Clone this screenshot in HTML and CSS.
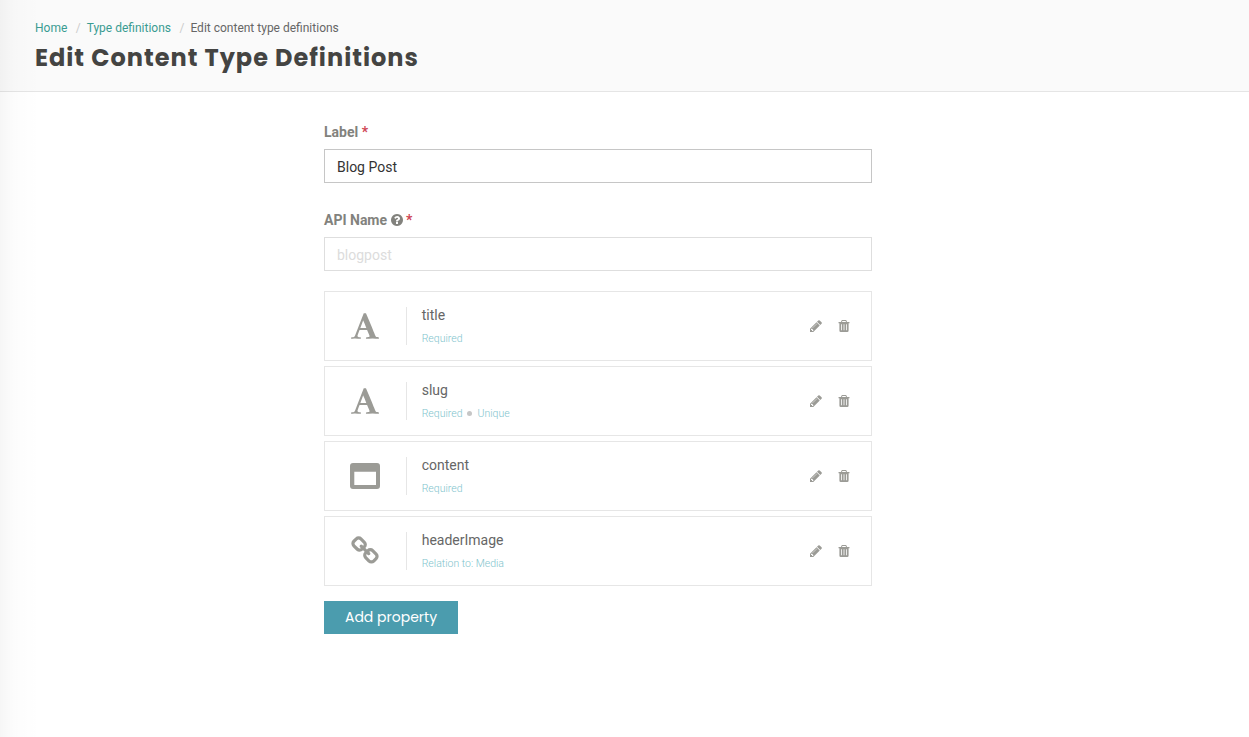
FILE: index.html
```html
<!DOCTYPE html>
<html lang="en">
<head>
<meta charset="utf-8">
<title>Edit Content Type Definitions</title>
<link rel="stylesheet" href="styles.css">
</head>
<body>
<svg class="sprite" aria-hidden="true">
  <symbol id="font" viewBox="0 0 1664 1792"><path d="M725 559l-170 450q33 0 136.500 2t160.500 2q19 0 57-2-87-253-184-450zM0 1664l2-79q23-7 56-12.500t57-10.500 49.500-14.500 44.500-29 31-50.500l237-616 280-724h128q8 14 11 21l205 480q33 78 106 257.500t114 274.500q15 34 58 144.500t72 168.500q20 45 35 57 19 15 88 29.500t84 20.500q6 38 6 57 0 5-.5 13.500t-.5 12.500q-63 0-190-8t-191-8q-76 0-215 7t-178 8q0-43 4-78l131-28q1 0 12.500-2.500t15.500-3.500 14.500-4.500 15-6.500 11-8 9-11 2.500-14q0-16-31-96.500t-72-177.500-42-100l-450-2q-26 58-76.500 195.500t-50.500 162.500q0 22 14 37.500t43.500 24.500 48.500 13.500 57 8.500 41 4q1 19 1 58 0 9-2 27-58 0-174.500-10t-174.500-10q-8 0-26.500 4t-21.500 4q-80 14-188 14z"/></symbol>
  <symbol id="window" viewBox="0 0 30 26"><path fill-rule="evenodd" d="M3 0h24a3 3 0 0 1 3 3v20a3 3 0 0 1-3 3H3a3 3 0 0 1-3-3V3a3 3 0 0 1 3-3zM4.300 8.700v13.300h21.700V8.700z"/></symbol>
  <symbol id="link" viewBox="0 0 1792 1792"><path d="M1520 1216q0-40-28-68l-208-208q-28-28-68-28-42 0-72 32 3 3 19 18.500t21.500 21.500 15 19 13 25.500 3.500 27.500q0 40-28 68t-68 28q-15 0-27.500-3.500t-25.500-13-19-15-21.500-21.500-18.500-19q-33 31-33 73 0 40 28 68l206 207q27 27 68 27 40 0 68-26l147-146q28-28 28-67zm-703-705q0-40-28-68l-206-207q-28-28-68-28-39 0-68 27l-147 146q-28 28-28 67 0 40 28 68l208 208q27 27 68 27 42 0 72-31-3-3-19-18.500t-21.500-21.500-15-19-13-25.500-3.500-27.500q0-40 28-68t68-28q15 0 27.500 3.500t25.500 13 19 15 21.500 21.500 18.500 19q33-31 33-73zm895 705q0 120-85 203l-147 146q-83 83-203 83-121 0-204-85l-206-207q-83-83-83-203 0-123 88-209l-88-88q-86 88-208 88-120 0-204-84l-208-208q-84-84-84-204t85-203l147-146q83-83 203-83 121 0 204 85l206 207q83 83 83 203 0 123-88 209l88 88q86-88 208-88 120 0 204 84l208 208q84 84 84 204z"/></symbol>
  <symbol id="pencil" viewBox="0 0 1792 1792"><path d="M491 1536l91-91-235-235-91 91v107h128v128h107zm523-928q0-22-22-22-10 0-17 7l-542 542q-7 7-7 17 0 22 22 22 10 0 17-7l542-542q7-7 7-17zm-54-192l416 416-832 832h-416v-416zm683 96q0 53-37 90l-166 166-416-416 166-165q36-38 90-38 53 0 91 38l235 234q37 39 37 91z"/></symbol>
  <symbol id="trash" viewBox="0 0 14 14"><path fill-rule="evenodd" d="M5.300 1h3.400q.6 0 .8.500L10 3h2.200q.3 0 .3.300v.9h-.9v7.300q0 1.500-1.300 1.500H3.700q-1.300 0-1.300-1.500V4.200h-.9v-.9q0-.3.300-.3H4l.5-1.500q.2-.5.800-.5zM5.400 2L5 3h4l-.4-1zM4.200 5.200v6h.8v-6zm2.400 0v6h.8v-6zm2.400 0v6h.8v-6z"/></symbol>
  <symbol id="help" viewBox="0 0 1792 1792"><path d="M1024 1376v-192q0-14-9-23t-23-9h-192q-14 0-23 9t-9 23v192q0 14 9 23t23 9h192q14 0 23-9t9-23zm256-672q0-88-55.500-163t-138.500-116-170-41q-243 0-371 213-15 24 8 42l132 100q7 6 19 6 16 0 25-12 53-68 86-92 34-24 86-24 48 0 85.500 26t37.500 59q0 38-20 61t-68 45q-63 28-115.500 86.500t-52.500 125.500v36q0 14 9 23t23 9h192q14 0 23-9t9-23q0-19 21.500-49.500t54.500-49.500q32-18 49-28.500t46-35 44.500-48 28-60.500 12.500-81zm384 192q0 209-103 385.500t-279.500 279.500-385.500 103-385.500-103-279.500-279.500-103-385.500 103-385.500 279.500-279.500 385.500-103 385.500 103 279.500 279.500 103 385.500z"/></symbol>
</svg>
<header class="header">
  <nav class="crumbs"><a href="#">Home</a><span class="sep">/</span><a href="#">Type definitions</a><span class="sep">/</span><span>Edit content type definitions</span></nav>
  <h1 class="title">Edit Content Type Definitions</h1>
</header>
<main class="form">
  <label class="label" for="name">Label <span class="star">*</span></label>
  <input class="input" id="name" value="Blog Post">
  <label class="label" for="api">API Name <svg class="help"><use href="#help"/></svg> <span class="star">*</span></label>
  <input class="input off" id="api" value="blogpost" disabled>
  <ul class="props">
    <li class="prop"><div class="kind"><svg class="i-font"><use href="#font"/></svg></div><div class="info"><div class="name">title</div><div class="meta">Required</div></div><div class="actions"><svg class="act"><use href="#pencil"/></svg><svg class="act"><use href="#trash"/></svg></div></li>
    <li class="prop"><div class="kind"><svg class="i-font"><use href="#font"/></svg></div><div class="info"><div class="name">slug</div><div class="meta">Required<i class="dot"></i>Unique</div></div><div class="actions"><svg class="act"><use href="#pencil"/></svg><svg class="act"><use href="#trash"/></svg></div></li>
    <li class="prop"><div class="kind"><svg class="i-window"><use href="#window"/></svg></div><div class="info"><div class="name">content</div><div class="meta">Required</div></div><div class="actions"><svg class="act"><use href="#pencil"/></svg><svg class="act"><use href="#trash"/></svg></div></li>
    <li class="prop"><div class="kind"><svg class="i-link"><use href="#link"/></svg></div><div class="info"><div class="name">headerImage</div><div class="meta">Relation to: Media</div></div><div class="actions"><svg class="act"><use href="#pencil"/></svg><svg class="act"><use href="#trash"/></svg></div></li>
  </ul>
  <button class="add">Add property</button>
</main>
<div class="shade"></div>
</body>
</html>
```
FILE: styles.css
```css
* { box-sizing: border-box; }
body { margin: 0; height: 737px; overflow: hidden; background: #fff; font: 14px/20px Roboto, sans-serif; color: #666; }
.sprite { display: none; }
svg { fill: #9b9b96; }
.shade { position: absolute; left: 0; top: 0; width: 40px; height: 737px; background: linear-gradient(90deg, rgba(0,0,0,.035), rgba(0,0,0,.01) 35%, transparent); pointer-events: none; }
.header { height: 92px; padding: 18px 35px 0; background: #fafafa; border-bottom: 1px solid #e5e5e5; }
.crumbs { display: flex; font-size: 12px; line-height: 20px; }
.crumbs a { color: #3a9c92; text-decoration: none; }
.sep { color: #ccc; width: 19.4px; padding-left: 8.5px; }
.title { margin: 4px 0 0; font: 700 24px/32px Poppins, "Noto Sans", sans-serif; letter-spacing: 1px; color: #444442; white-space: nowrap; }
.form { width: 548px; margin: 30px 0 0 324px; }
.label { display: flex; align-items: center; gap: 3.5px; height: 20px; font-weight: 700; color: #82827d; }
.star { color: #cf4554; }
.help { width: 14px; height: 14px; fill: #82827d; margin: 0 -1px; }
.input { display: block; width: 100%; height: 34px; margin: 7px 0 27px; padding: 2px 12px 0; border: 1px solid #c6c6c6; background: #fff; font: 14px Roboto, sans-serif; color: #333; }
.off { margin-bottom: 20px; border-color: #dedede; color: #dcdcdc; }
.props { display: grid; gap: 5px; margin: 0 0 15px; padding: 0; list-style: none; }
.prop { display: flex; align-items: center; height: 70px; border: 1px solid #e6e6e6; }
.kind { display: flex; align-items: center; justify-content: center; width: 82px; height: 38px; padding-right: 1px; border-right: 1px solid #e6e6e6; }
.i-font { width: 28px; height: 30px; }
.i-window { width: 30px; height: 26px; }
.i-link { width: 30px; height: 30px; }
.info { flex: 1; padding: 1px 0 0 14.700px; }
.name { line-height: 20px; }
.meta { display: flex; align-items: center; height: 20px; margin-top: 4px; font-size: 10.500px; font-weight: 300; color: #7fc4cd; }
.dot { width: 5px; height: 5px; margin: 0 5px; border-radius: 50%; background: #c6c6c6; }
.actions { display: flex; gap: 14px; padding-right: 20px; }
.act { width: 14px; height: 14px; }
.add { display: block; width: 134px; height: 33px; padding: 0 0 1px; border: 0; background: #4b9cae; color: #fff; font: 400 14px/32px Poppins, "Noto Sans", sans-serif; white-space: nowrap; }
```
